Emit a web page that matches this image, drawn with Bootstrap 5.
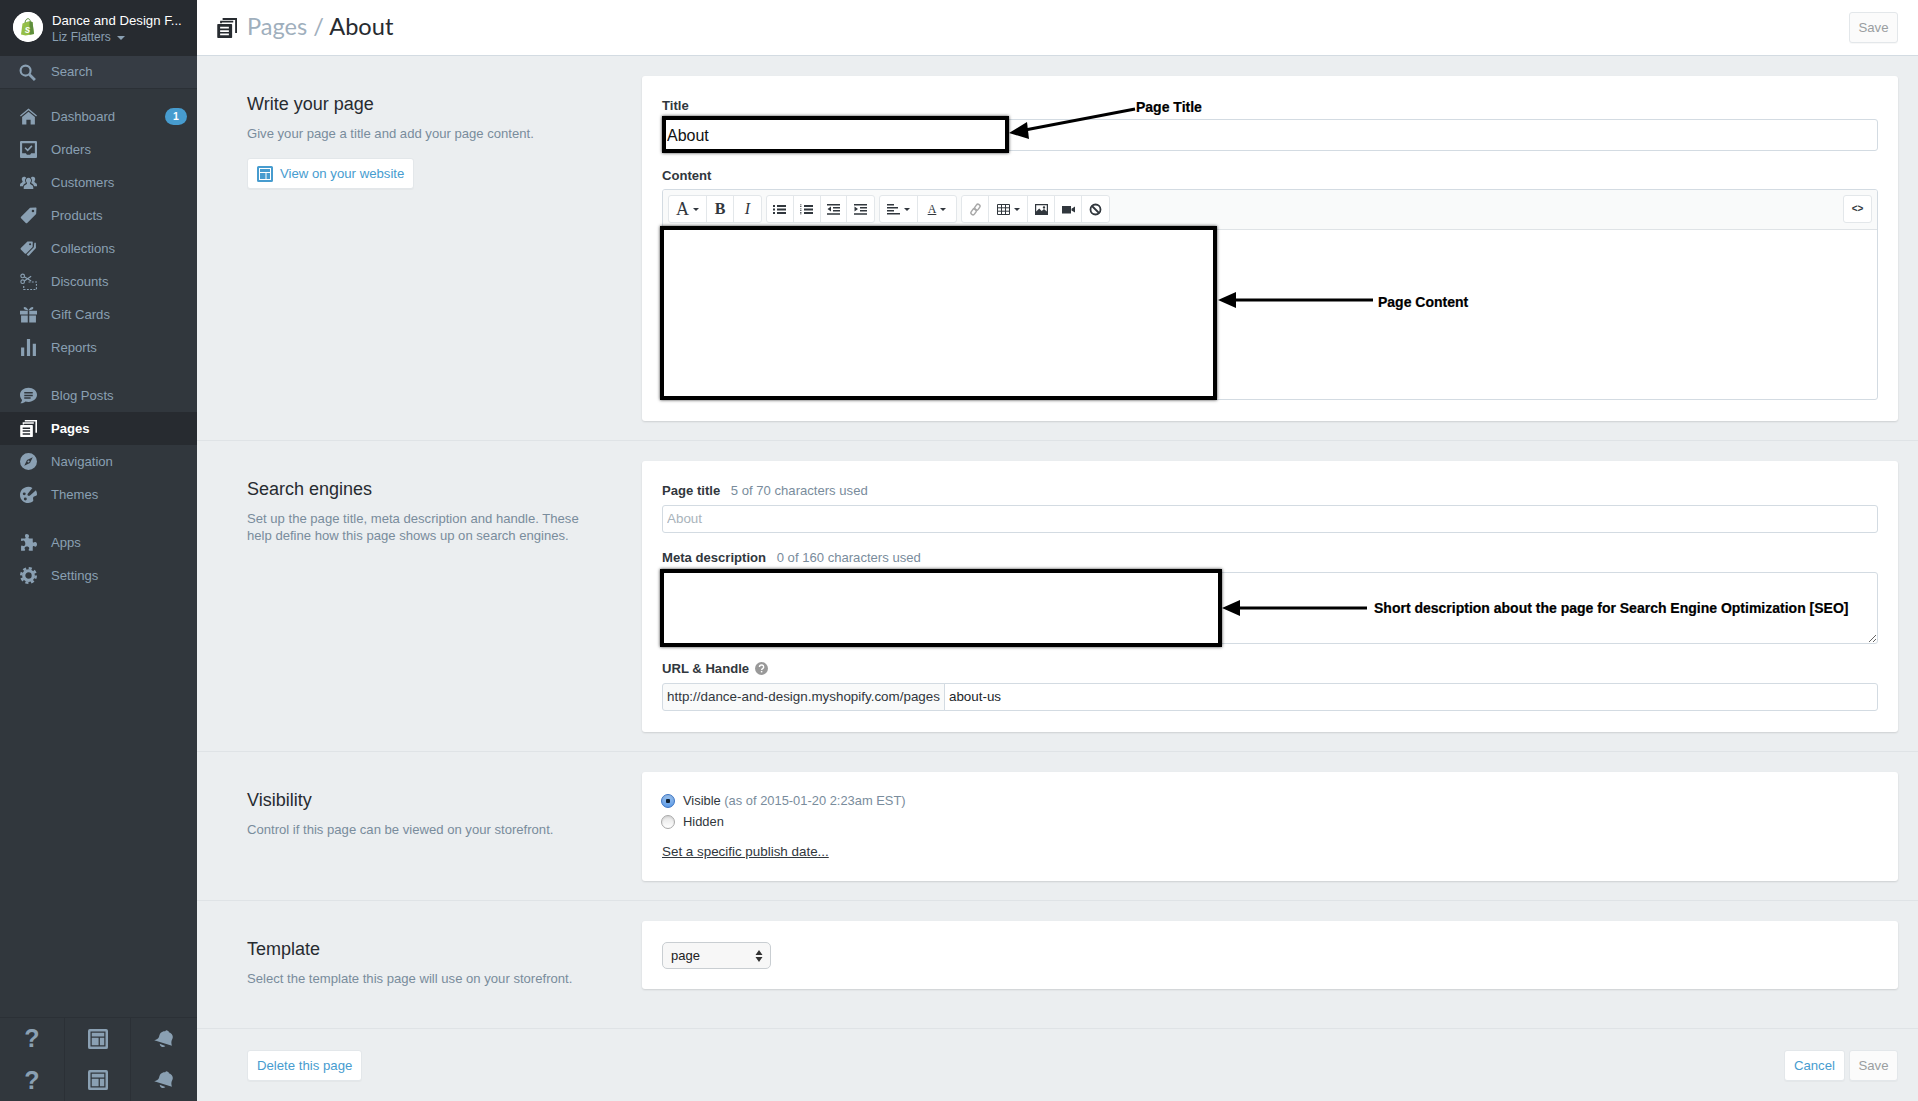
<!doctype html>
<html lang="en">
<head>
<meta charset="utf-8">
<title>Pages / About</title>
<link href="https://cdn.jsdelivr.net/npm/bootstrap@5.3.0/dist/css/bootstrap.min.css" rel="stylesheet">
<style>
html,body{height:1101px;overflow:hidden}
body{font-family:"Liberation Sans",Arial,sans-serif;font-size:13.1px;background:#ebeef0;color:#31373d;line-height:20px}
.shell{height:1101px;position:relative}
.side{width:197px;flex:0 0 197px;background:#31373d;color:#8aa0b3}
.store{height:56px;background:#272b30;padding:12px 0 0 13px;gap:9px}
.store-logo{width:30px;height:30px;border-radius:50%;background:#fff;flex:none}
.store-name{color:#fff;font-size:13.2px;line-height:16px;white-space:nowrap;margin-top:1px}
.store-user{color:#8aa0b3;font-size:12px;line-height:16px}
.caret-mini{display:inline-block;border:4px solid transparent;border-top-color:#8aa0b3;border-bottom:0;vertical-align:middle;margin-left:3px}
.side-search{height:33px;background:#363c44;border-bottom:1px solid #2b3036;padding-left:19px;gap:15px}
.side-search svg{width:17px;height:17px}
.side-group{margin-top:11px}
.side-group+.side-group{margin-top:15px}
.side-link{height:33px;padding:0 10px 0 20px;gap:14px;color:#8aa0b3;text-decoration:none}
.side-link svg{width:17px;height:17px;flex:none}
.side-link.on{background:#272b30;color:#fff;font-weight:700}
.side-pill{background:#479ccf;color:#fff;font-size:10.5px;font-weight:700;border-radius:9px;width:22px;height:17px;line-height:17px;text-align:center}
.side-foot{margin-top:auto;border-top:1px solid #2b3036}
.foot-row{height:41.5px}
.foot-row>div{flex:1 1 0;border-right:1px solid #2b3036;color:#8aa0b3}
.foot-row>div:first-child{flex:0 0 65px}
.foot-row>div:nth-child(2){flex:0 0 66px}
.foot-row>div:last-child{border-right:0}
.foot-row svg{width:20px;height:20px}
.foot-row .foot-bell{width:22px;height:20px}
.foot-q{font-weight:700;font-size:25px;line-height:1}
.topbar{height:56px;background:#fff;border-bottom:1px solid #d3dbe2;padding:0 20px;flex:none}
.topbar svg{width:20px;height:20px;color:#272b30}
.crumb{font-family:Lato,"Liberation Sans",sans-serif;font-size:23.6px;color:#9fafbd;margin:0 0 0 10px;padding-bottom:2px;font-weight:400}
.crumb b{font-weight:400;color:#272b30}
.btn-pale{--bs-btn-font-size:13.2px;--bs-btn-padding-x:9px;--bs-btn-padding-y:0;--bs-btn-bg:#fff;--bs-btn-border-color:#e3e7ea;--bs-btn-color:#479ccf;--bs-btn-border-radius:3px;--bs-btn-hover-bg:#fff;line-height:29px;height:31px;box-shadow:0 1px 1px rgba(0,0,0,.03)}
.btn-off{--bs-btn-color:#9a9ea1;--bs-btn-bg:#fbfbfb;--bs-btn-padding-x:8.5px}
.zone{padding:20px 20px 19px 50px;border-bottom:1px solid #dfe3e6}
.zone-last{padding-bottom:25px}
.zone-info{width:395px;flex:none;padding-top:17px}
.zone-info h2{font-size:18px;font-weight:400;line-height:22px;color:#272b30;margin:0 0 10px}
.zone-info p{color:#798c9c;font-size:13.1px;line-height:17px;margin:0 0 16px;width:340px}
.btn-view{padding:0 9px;gap:7px}
.btn-view svg{width:16px;height:16px}
.pane{flex:1;background:#fff;border-radius:3px;box-shadow:0 1px 2px rgba(0,0,0,.13);padding:21px 20px 20px}
.pane-radio{padding:19px 20px 19px}
.pane-seo{padding-bottom:21px}
.fld{font-size:13.1px;font-weight:700;line-height:16px;padding-top:1px;margin:0 0 5px;color:#31373d;display:block}
.pane-seo .fld{margin-bottom:6px}
.fld span{font-weight:400;color:#798c9c;margin-left:7px}
.fld svg{width:13px;height:13px;color:#999;margin:-3px 0 0 2px;vertical-align:middle}
.form-control.ctl{height:32px;border-radius:3px;border-color:#d3dbe2;padding:2px 4px 3px;font-size:13.4px;line-height:20px;box-shadow:none}
.form-control.ctl-big{font-size:16px;color:#111;padding:5px 4px 3px}
.ctl::placeholder{color:#a9b3bb;opacity:1}
.form-control.ctl-sm{height:28px}
.edit-wrap{border:1px solid #d3dbe2;border-radius:3px;overflow:hidden;margin-bottom:1px}
.edit-tools{height:40px;background:#f9fafa;border-bottom:1px solid #dfe3e6;padding:5px 5px 0 5px;gap:4px}
.tool-set{height:28px;border:1px solid #e3e7ea;border-radius:3px;background:#fff}
.tool{height:26px;border-right:1px solid #e3e7ea;color:#31373d;font-size:15px;gap:4px}
.tool:last-child{border-right:0}
.tool svg{width:13px;height:13px}
.w27{width:27px}.w39{width:39px}.w38{width:38px}.w268{width:26.75px}
.t-ser{font-family:"Liberation Serif",serif;font-weight:700;font-size:16px}
.t-big{font-size:18px;font-weight:400}
.t-und{font-size:12px;font-weight:400;text-decoration:underline}
.t-code{font-size:10px;font-weight:700}
.car{display:inline-block;border:3.5px solid transparent;border-top-color:#31373d;border-bottom:0}
.edit-body{height:169px}
.form-control.meta-area{height:72px;resize:vertical}
.addon{background:#f9fafa;border-color:#d3dbe2;color:#31373d;font-size:13.4px;padding:3px 4px;border-radius:3px 0 0 3px}
.rad{font-size:12.9px;line-height:20px;gap:8px;margin:0 0 0 -1px}
.rad+.rad{margin-top:1px}
.rad span span{color:#798c9c}
.rad input{width:14px;height:14px;margin:0;border-color:#aaa;background-color:#eee;background-image:linear-gradient(#e4e4e4,#fff);box-shadow:inset 0 1px 2px rgba(0,0,0,.1)}
.rad input:checked{border-color:#3f77c5;background-color:#7fb0ec;background-image:radial-gradient(circle at center,#123 0,#123 2px,transparent 2.5px),linear-gradient(#9cc4f2,#5f9ce6)}
.plain-link{color:#31373d;font-size:13.4px;text-decoration:underline;display:inline-block;margin-top:10px}
.sel{width:109px;height:27px;font-size:13px;padding:2px 8px;border-radius:5px;border-color:#c9ced2;background-color:#f7f7f7;color:#222;line-height:20px;background-size:10px 14px;background-position:right 6px center;
background-image:url("data:image/svg+xml,%3Csvg xmlns='http://www.w3.org/2000/svg' viewBox='0 0 10 14'%3E%3Cpath d='M5 1l3.500 5h-7zM5 13L1.500 8h7z' fill='%23333'/%3E%3C/svg%3E")}
.bottombar{padding:21px 20px 0 50px}
.over{position:absolute;pointer-events:none}
.ring{border:4px solid #000;box-shadow:0 0 3px rgba(0,0,0,.75)}
.note{position:absolute;font-size:14px;font-weight:700;color:#000;line-height:18px;white-space:nowrap;-webkit-text-stroke:.2px #000}
#arrows{left:0;top:0}
#r1{left:662px;top:116px;width:347px;height:37px}
#r2{left:660px;top:226px;width:557px;height:174px}
#r3{left:660px;top:569px;width:562px;height:78px}
#n1{left:1136px;top:98px}
#n2{left:1378px;top:293px}
#n3{left:1374px;top:599px}
</style>
</head>
<body>
<svg width="0" height="0" class="position-absolute">
<defs>
<symbol id="i-home" viewBox="0 0 16 16"><path fill="currentColor" d="M8 .5L0 7l.8 1L8 2.200 15.200 8l.8-1zM8 3.600L2 8.400V15.500h4V11h4v4.500h4V8.400z"/></symbol>
<symbol id="i-orders" viewBox="0 0 16 16"><path fill="currentColor" fill-rule="evenodd" d="M1 0h14a1 1 0 011 1v14a1 1 0 01-1 1H1a1 1 0 01-1-1V1a1 1 0 011-1zM2 2v9.500h3.500l1 1.500h3l1-1.500H14V2z"/><path d="M4.800 6.400l2.400 2.400 4-4.200" fill="none" stroke="currentColor" stroke-width="1.500"/></symbol>
<symbol id="i-cust" viewBox="0 0 16 16"><path fill="currentColor" d="M8 3.500a2.500 2.500 0 012.300 3.400c-.4 1-.9 1.600-.9 2.100 0 1 3.100 1.300 3.100 3.500V14h-9v-1.500C3.500 10.300 6.600 10 6.600 9c0-.5-.5-1.100-.9-2.100A2.500 2.500 0 018 3.500zM3.800 2.500c1 0 1.700.5 2 1.200-.9.700-1.300 1.900-.9 3.200.2.600.5 1.100.6 1.500-.8.500-2.500 1.200-2.700 3.100H0v-1.500c0-1.700 2.500-2 2.500-2.800 0-.4-.4-.9-.7-1.600-.5-1.500.4-3.100 2-3.100zM12.200 2.500c1.600 0 2.500 1.600 2 3.100-.3.700-.7 1.200-.7 1.600 0 .8 2.500 1.100 2.500 2.800V11.500h-2.800c-.2-1.900-1.900-2.600-2.700-3.100.1-.4.400-.9.600-1.500.4-1.300 0-2.500-.9-3.200.3-.7 1-1.200 2-1.200z"/></symbol>
<symbol id="i-tag" viewBox="0 0 16 16"><path fill="currentColor" fill-rule="evenodd" d="M9.500.8L15 .5c.3 0 .5.200.5.500l-.3 5.500L6.800 15a1 1 0 01-1.400 0L1 10.600a1 1 0 010-1.400zM12.200 2.600a1.200 1.200 0 100 2.400 1.200 1.200 0 000-2.400z"/></symbol>
<symbol id="i-coll" viewBox="0 0 16 16"><path fill="currentColor" fill-rule="evenodd" d="M7 1.500h4.500c.3 0 .5.200.5.500l-.1 4.500-6 6.200a1 1 0 01-1.400 0L.8 9a1 1 0 010-1.400zM9.500 3a1 1 0 100 2 1 1 0 000-2z"/><path fill="currentColor" d="M13.500 2.500h1.400l.1 5-6.500 7a1 1 0 01-1.400 0l-.8-.8 6.700-6.900z"/></symbol>
<symbol id="i-disc" viewBox="0 0 16 16"><g fill="none" stroke="currentColor" stroke-width="1.100"><circle cx="2.500" cy="2.800" r="1.700"/><circle cx="2.500" cy="8.200" r="1.700"/><path d="M4 3.500l6.500 4M4 7.500l6.500-4.500"/><path stroke-dasharray="1.800 1.300" d="M8 8.500h7.500v7H3.500v-4"/></g></symbol>
<symbol id="i-gift" viewBox="0 0 16 16"><path fill="currentColor" d="M0 4.500h7.300V8H0zM8.700 4.500H16V8H8.700zM1 9h6.300v6.500H1zM8.700 9H15v6.500H8.700zM8 4C6.500 1 4 .2 3.500 1.300 3 2.500 5 4 8 4zm0 0c1.500-3 4-3.800 4.500-2.700C13 2.500 11 4 8 4z"/></symbol>
<symbol id="i-rep" viewBox="0 0 16 16"><path fill="currentColor" d="M1 8h3v8H1zM6.500 0h3v16h-3zM12 4.500h3V16h-3z"/></symbol>
<symbol id="i-blog" viewBox="0 0 16 16"><path fill="currentColor" fill-rule="evenodd" d="M8 .8c4.400 0 8 2.900 8 6.600S12.400 14 8 14c-1 0-2-.1-2.900-.4C4 14.800 2 15.500.3 15.300c.9-.9 1.500-2 1.600-3.100C.7 11 0 9.300 0 7.400 0 3.700 3.600.8 8 .8zM4 4.800v1.400h8V4.800zM4 7.200v1.400h8V7.200zM4 9.700v1.300h6V9.700z"/></symbol>
<symbol id="i-pages" viewBox="0 0 16 16"><path fill="currentColor" fill-rule="evenodd" d="M4.500 0H16v12h-1.500V1.500h-10zM2.500 2.200h10.500v1.400H3.900v.6H2.500zM.8 4.800h10.700a.6.600 0 01.600.6v10a.6.600 0 01-.6.600H.8a.6.600 0 01-.6-.6V5.400a.6.600 0 01.6-.6zm1.700 2.200v1.400h7V7zm0 2.700v1.400h7V9.700zm0 2.700v1.400h7v-1.400z"/></symbol>
<symbol id="i-nav" viewBox="0 0 16 16"><path fill="currentColor" fill-rule="evenodd" d="M8 0a8 8 0 110 16A8 8 0 018 0zm4 4L6.600 6.600 4 12l5.400-2.600zM8 7a1 1 0 110 2 1 1 0 010-2z"/></symbol>
<symbol id="i-theme" viewBox="0 0 16 16"><path fill="currentColor" fill-rule="evenodd" d="M7.800.8c1.500 0 2.800.4 3.900 1.100L7.500 7c-.6.700-.5 1.500 0 2 .6.500 1.300.5 1.900-.1L15 4c.7 1.100 1 2.400 1 3.800 0 2-2.800 1.500-3.500 2.700-.8 1.400.7 2.800-.3 3.900C10.900 15.600 9.400 16 7.800 16 3.500 16 0 12.600 0 8.400S3.500.8 7.800.8zM4 6a1.400 1.400 0 100 2.800A1.400 1.400 0 004 6zM5 10.800a1.400 1.400 0 100 2.800 1.400 1.400 0 000-2.800z"/></symbol>
<symbol id="i-apps" viewBox="0 0 16 16"><path fill="currentColor" d="M6.200 0c1.300 0 2.300.8 2.300 1.800 0 .9-.5 1-.5 1.700 0 .4.400.7 1 .7h3v3c0 .5.300.9.700.9.700 0 .8-.6 1.700-.6 1 0 1.600 1 1.600 2.200s-.6 2.200-1.600 2.200c-.9 0-1-.6-1.700-.6-.4 0-.7.400-.7.900v3.500H9c-.5 0-.9-.3-.9-.7 0-.7.600-.8.600-1.700 0-1-1-1.600-2.200-1.600s-2.200.6-2.200 1.600c0 .9.600 1 .6 1.700 0 .4-.4.700-.9.700H1v-4c0-.5.300-.9.700-.9.600 0 .7.500 1.500.5 1 0 1.800-1 1.800-2.200S4.200 6.200 3.200 6.200c-.8 0-.9.500-1.500.5C1.300 6.700 1 6.300 1 5.800V4.200h3.300c.6 0 1-.3 1-.7 0-.7-.6-.8-.6-1.700C4.700.8 5 0 6.200 0z"/></symbol>
<symbol id="i-gear" viewBox="0 0 16 16"><circle cx="8" cy="8" r="4.500" fill="none" stroke="currentColor" stroke-width="3"/><circle cx="8" cy="8" r="6.800" fill="none" stroke="currentColor" stroke-width="2.400" stroke-dasharray="2.900 2.440"/></symbol>
<symbol id="i-search" viewBox="0 0 16 16"><circle cx="6.200" cy="6.200" r="4.700" fill="none" stroke="currentColor" stroke-width="2"/><path d="M9.800 9.800l5.200 5.200" stroke="currentColor" stroke-width="2.600" fill="none"/></symbol>
<symbol id="i-lay" viewBox="0 0 16 16"><path fill="currentColor" fill-rule="evenodd" d="M1.500 0h13A1.500 1.500 0 0116 1.500v13a1.500 1.500 0 01-1.500 1.500h-13A1.500 1.500 0 010 14.500v-13A1.500 1.500 0 011.500 0zm.5 2v12h12V2z"/><path fill="currentColor" d="M3 3h10v3H3zM3 7h5.500v6H3zM9.500 7H13v6H9.500z"/></symbol>
<symbol id="i-bell" viewBox="0 0 18 16"><path fill="currentColor" d="M12 1.300a1.300 1.300 0 00-2 .3C6.800 1.500 5.500 3.500 5 6c-.4 1.800-2.200 2.600-4 3l14.500 4.500c-.6-1.800-.7-3.700.2-5.200C17 6 15.800 3.600 13 2.500c0-.5-.4-1-1-1.200zM5.500 11.800c0 1.300.8 2.300 2 2.700 1 .3 2 0 2.600-.7z"/></symbol>
<symbol id="i-ul" viewBox="0 0 13 13"><path fill="currentColor" d="M0 2h2v2H0zM4 2h9v2H4zM0 5.500h2v2H0zM4 5.500h9v2H4zM0 9h2v2H0zM4 9h9v2H4z"/></symbol>
<symbol id="i-ol" viewBox="0 0 13 13"><path fill="currentColor" d="M4 2h9v2H4zM4 5.500h9v2H4zM4 9h9v2H4zM0 1.500h1.500v.8H0zM0 3.200h1.500V4H0zM0 5.500h1.500v.8H0zM0 7h1.500v.8H0zM0 9h1.500v.8H0zM0 10.500h1.500v.8H0z"/></symbol>
<symbol id="i-out" viewBox="0 0 13 13"><path fill="currentColor" d="M0 1h13v1.500H0zM6 4h7v1.500H6zM6 7h7v1.500H6zM0 10.200h13v1.500H0zM4 3.500v5L.5 6z"/></symbol>
<symbol id="i-ind" viewBox="0 0 13 13"><path fill="currentColor" d="M0 1h13v1.500H0zM6 4h7v1.500H6zM6 7h7v1.500H6zM0 10.200h13v1.500H0zM.5 3.500v5L4 6z"/></symbol>
<symbol id="i-al" viewBox="0 0 13 13"><path fill="currentColor" d="M0 1h7v1.500H0zM0 4h11v1.500H0zM0 7h7v1.500H0zM0 10h13v1.500H0z"/></symbol>
<symbol id="i-link" viewBox="0 0 13 13"><g fill="none" stroke="#a9a9a9" stroke-width="1.500"><rect x="6.300" y="1" width="4" height="6.500" rx="2" transform="rotate(35 8.300 4.200)"/><rect x="2.700" y="5.500" width="4" height="6.500" rx="2" transform="rotate(35 4.700 8.700)"/></g></symbol>
<symbol id="i-tbl" viewBox="0 0 13 13"><path fill="none" stroke="currentColor" d="M.5 1.500h12v10H.5zM.5 4.800h12M.5 8.200h12M4.500 1.500v10M8.500 1.500v10"/></symbol>
<symbol id="i-img" viewBox="0 0 13 13"><path fill="currentColor" fill-rule="evenodd" d="M0 1h13v11H0zm1.200 1.200v6.300l3-3 2.500 2.500 2.300-2 2.800 2.500V2.200zM9 3.200a1.200 1.200 0 110 2.400 1.200 1.200 0 010-2.400z"/></symbol>
<symbol id="i-vid" viewBox="0 0 13 13"><path fill="currentColor" d="M0 3h9v7.500H0zM9.500 5.800L13 3.500v6L9.500 7.500z"/></symbol>
<symbol id="i-no" viewBox="0 0 13 13"><circle cx="6.500" cy="6.500" r="5" fill="none" stroke="currentColor" stroke-width="1.800"/><path d="M3 3l7 7" stroke="currentColor" stroke-width="1.800"/></symbol>
<symbol id="i-help" viewBox="0 0 16 16"><circle cx="8" cy="8" r="8" fill="currentColor"/><path d="M5.500 6.200c0-3.300 5.200-3.300 5.200 0 0 2-2.600 1.900-2.600 3.600" fill="none" stroke="#fff" stroke-width="1.700"/><rect x="7.200" y="11" width="1.800" height="1.800" fill="#fff"/></symbol>
</defs>
</svg>
<div class="shell d-flex">
  <nav class="side d-flex flex-column">
    <div class="store d-flex">
      <svg class="store-logo" viewBox="0 0 30 30"><circle cx="15" cy="15" r="15" fill="#fff"/><path d="M9.500 11.500L15 9.500l1.200-.3 3.300.7 1.500 12-8.500 1.500-4.500-.9z" fill="#95bf47"/><path d="M12 11c.2-3 1.800-4.300 3-4.300s2.200 1 2.400 3" fill="none" stroke="#5e8e3e" stroke-width="1"/><path d="M16.500 9.200l3 .7 1.500 12-4.500.9z" fill="#5e8e3e"/><text x="14.500" y="20.500" font-family="Liberation Sans" font-weight="700" font-style="italic" font-size="10" fill="#fff" text-anchor="middle">s</text></svg>
      <div><div class="store-name">Dance and Design F...</div><div class="store-user">Liz Flatters <i class="caret-mini"></i></div></div>
    </div>
    <div class="side-search d-flex align-items-center"><svg><use href="#i-search"/></svg><span>Search</span></div>
    <div class="side-group">
      <a class="side-link d-flex align-items-center" href="#"><svg><use href="#i-home"/></svg><span class="flex-grow-1">Dashboard</span><span class="side-pill">1</span></a>
      <a class="side-link d-flex align-items-center" href="#"><svg><use href="#i-orders"/></svg><span>Orders</span></a>
      <a class="side-link d-flex align-items-center" href="#"><svg><use href="#i-cust"/></svg><span>Customers</span></a>
      <a class="side-link d-flex align-items-center" href="#"><svg><use href="#i-tag"/></svg><span>Products</span></a>
      <a class="side-link d-flex align-items-center" href="#"><svg><use href="#i-coll"/></svg><span>Collections</span></a>
      <a class="side-link d-flex align-items-center" href="#"><svg><use href="#i-disc"/></svg><span>Discounts</span></a>
      <a class="side-link d-flex align-items-center" href="#"><svg><use href="#i-gift"/></svg><span>Gift Cards</span></a>
      <a class="side-link d-flex align-items-center" href="#"><svg><use href="#i-rep"/></svg><span>Reports</span></a>
    </div>
    <div class="side-group">
      <a class="side-link d-flex align-items-center" href="#"><svg><use href="#i-blog"/></svg><span>Blog Posts</span></a>
      <a class="side-link on d-flex align-items-center" href="#"><svg><use href="#i-pages"/></svg><span>Pages</span></a>
      <a class="side-link d-flex align-items-center" href="#"><svg><use href="#i-nav"/></svg><span>Navigation</span></a>
      <a class="side-link d-flex align-items-center" href="#"><svg><use href="#i-theme"/></svg><span>Themes</span></a>
    </div>
    <div class="side-group">
      <a class="side-link d-flex align-items-center" href="#"><svg><use href="#i-apps"/></svg><span>Apps</span></a>
      <a class="side-link d-flex align-items-center" href="#"><svg><use href="#i-gear"/></svg><span>Settings</span></a>
    </div>
    <div class="side-foot">
      <div class="foot-row d-flex"><div class="d-flex align-items-center justify-content-center foot-q">?</div><div class="d-flex align-items-center justify-content-center"><svg><use href="#i-lay"/></svg></div><div class="d-flex align-items-center justify-content-center"><svg class="foot-bell"><use href="#i-bell"/></svg></div></div>
      <div class="foot-row d-flex"><div class="d-flex align-items-center justify-content-center foot-q">?</div><div class="d-flex align-items-center justify-content-center"><svg><use href="#i-lay"/></svg></div><div class="d-flex align-items-center justify-content-center"><svg class="foot-bell"><use href="#i-bell"/></svg></div></div>
    </div>
  </nav>
  <main class="flex-grow-1 d-flex flex-column">
    <header class="topbar d-flex align-items-center">
      <svg><use href="#i-pages"/></svg>
      <h1 class="crumb">Pages / <b>About</b></h1>
      <button class="btn btn-pale btn-off ms-auto" type="button">Save</button>
    </header>
    <section class="zone d-flex">
      <div class="zone-info">
        <h2>Write your page</h2>
        <p>Give your page a title and add your page content.</p>
        <a class="btn btn-pale btn-view d-inline-flex align-items-center" href="#"><svg><use href="#i-lay"/></svg>View on your website</a>
      </div>
      <div class="pane">
        <label class="fld">Title</label>
        <input class="form-control ctl ctl-big mb-3" value="About">
        <label class="fld">Content</label>
        <div class="edit-wrap">
          <div class="edit-tools d-flex">
            <div class="tool-set d-flex">
              <div class="tool w38 d-flex align-items-center justify-content-center t-ser t-big">A<i class="car"></i></div>
              <div class="tool w27 d-flex align-items-center justify-content-center t-ser">B</div>
              <div class="tool w27 d-flex align-items-center justify-content-center t-ser fst-italic fw-normal">I</div>
            </div>
            <div class="tool-set d-flex">
              <div class="tool w268 d-flex align-items-center justify-content-center"><svg><use href="#i-ul"/></svg></div>
              <div class="tool w268 d-flex align-items-center justify-content-center"><svg><use href="#i-ol"/></svg></div>
              <div class="tool w268 d-flex align-items-center justify-content-center"><svg><use href="#i-out"/></svg></div>
              <div class="tool w268 d-flex align-items-center justify-content-center"><svg><use href="#i-ind"/></svg></div>
            </div>
            <div class="tool-set d-flex">
              <div class="tool w38 d-flex align-items-center justify-content-center"><svg><use href="#i-al"/></svg><i class="car"></i></div>
              <div class="tool w38 d-flex align-items-center justify-content-center"><span class="t-ser t-und">A</span><i class="car"></i></div>
            </div>
            <div class="tool-set d-flex">
              <div class="tool w27 d-flex align-items-center justify-content-center"><svg><use href="#i-link"/></svg></div>
              <div class="tool w39 d-flex align-items-center justify-content-center"><svg><use href="#i-tbl"/></svg><i class="car"></i></div>
              <div class="tool w27 d-flex align-items-center justify-content-center"><svg><use href="#i-img"/></svg></div>
              <div class="tool w27 d-flex align-items-center justify-content-center"><svg><use href="#i-vid"/></svg></div>
              <div class="tool w27 d-flex align-items-center justify-content-center"><svg><use href="#i-no"/></svg></div>
            </div>
            <div class="tool-set d-flex ms-auto">
              <div class="tool w27 d-flex align-items-center justify-content-center t-code">&lt;&gt;</div>
            </div>
          </div>
          <div class="edit-body"></div>
        </div>
      </div>
    </section>
    <section class="zone d-flex">
      <div class="zone-info">
        <h2>Search engines</h2>
        <p>Set up the page title, meta description and handle. These help define how this page shows up on search engines.</p>
      </div>
      <div class="pane pane-seo">
        <label class="fld">Page title <span>5 of 70 characters used</span></label>
        <input class="form-control ctl ctl-sm mb-3" placeholder="About">
        <label class="fld">Meta description <span>0 of 160 characters used</span></label>
        <textarea class="form-control ctl meta-area mb-3"></textarea>
        <label class="fld">URL &amp; Handle <svg><use href="#i-help"/></svg></label>
        <div class="input-group">
          <span class="input-group-text addon">http://dance-and-design.myshopify.com/pages</span>
          <input class="form-control ctl ctl-sm" value="about-us">
        </div>
      </div>
    </section>
    <section class="zone d-flex">
      <div class="zone-info">
        <h2>Visibility</h2>
        <p>Control if this page can be viewed on your storefront.</p>
      </div>
      <div class="pane pane-radio">
        <label class="rad d-flex align-items-center"><input class="form-check-input" type="radio" name="vis" checked><span>Visible <span>(as of 2015-01-20 2:23am EST)</span></span></label>
        <label class="rad d-flex align-items-center"><input class="form-check-input" type="radio" name="vis"><span>Hidden</span></label>
        <a class="plain-link" href="#">Set a specific publish date...</a>
      </div>
    </section>
    <section class="zone zone-last d-flex">
      <div class="zone-info">
        <h2>Template</h2>
        <p>Select the template this page will use on your storefront.</p>
      </div>
      <div class="pane align-self-start">
        <select class="form-select sel"><option>page</option></select>
      </div>
    </section>
    <footer class="bottombar d-flex">
      <a class="btn btn-pale" href="#">Delete this page</a>
      <a class="btn btn-pale ms-auto me-1" href="#">Cancel</a>
      <button class="btn btn-pale btn-off" type="button">Save</button>
    </footer>
  </main>
  <div class="over ring" id="r1"></div>
  <div class="over ring" id="r2"></div>
  <div class="over ring" id="r3"></div>
  <svg class="over" id="arrows" width="1918" height="1101" viewBox="0 0 1918 1101">
    <g stroke="#000" stroke-width="3" fill="#000">
      <path d="M1135 109L1025 130"/><path stroke="none" d="M1009 133l18-11 2 17z"/>
      <path d="M1373 300H1232"/><path stroke="none" d="M1218 300l18-8v16z"/>
      <path d="M1367 608H1237"/><path stroke="none" d="M1222 608l18-8v16z"/>
    </g>
  </svg>
  <div class="note" id="n1">Page Title</div>
  <div class="note" id="n2">Page Content</div>
  <div class="note" id="n3">Short description about the page for Search Engine Optimization [SEO]</div>
</div>
<script src="https://cdn.jsdelivr.net/npm/bootstrap@5.3.0/dist/js/bootstrap.bundle.min.js"></script>
</body>
</html>
